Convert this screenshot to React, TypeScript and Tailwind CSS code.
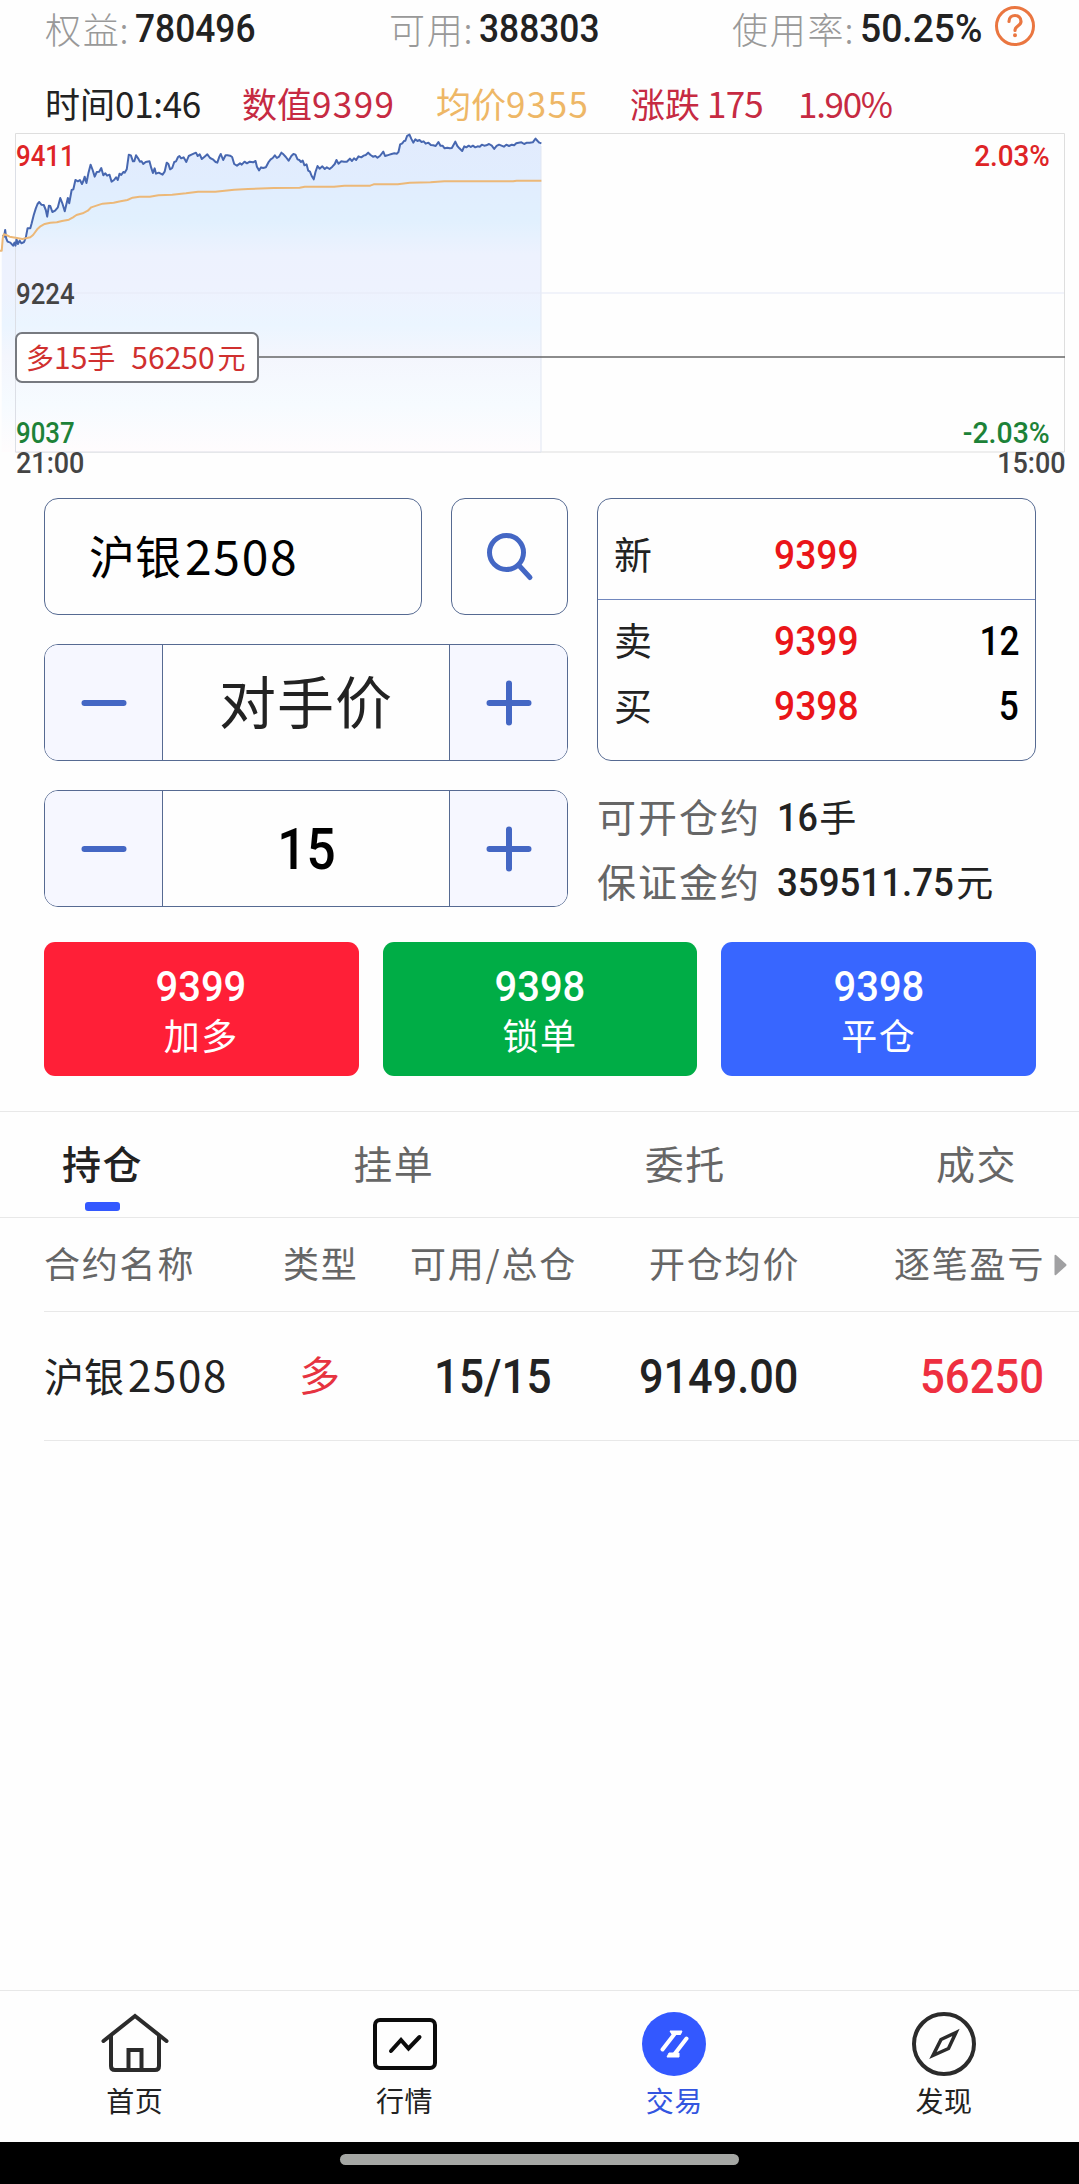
import type { ReactNode } from "react";

const PRICE =
  "8,705 12,710 15,690 18,715 22,725 30,728 38,737 42,728 45,737 48,718 52,732 57,722 62,730 70,726 75,712 80,685 88,685 92,670 98,645 104,625 109,612 114,606 120,614 127,615 133,630 137,650 142,617 146,618 152,636 160,632 168,622 175,594 181,610 188,634 197,594 201,610 208,570 213,568 219,540 226,544 232,540 238,552 242,543 246,530 251,549 257,518 263,494 269,510 275,530 281,516 288,515 294,504 300,526 306,520 311,527 318,524 324,545 331,540 337,532 342,540 347,521 352,525 358,516 362,518 368,508 374,464 380,466 386,484 390,484 395,466 401,475 406,485 411,484 416,492 423,486 434,484 439,503 444,519 449,505 453,521 461,518 472,524 478,515 484,488 489,492 494,508 500,504 506,486 511,484 517,471 521,468 526,475 533,472 541,486 548,468 556,464 564,460 569,458 574,468 580,463 586,477 594,470 602,463 610,474 618,478 626,486 631,488 637,470 641,462 648,480 655,466 661,466 668,467 674,471 680,492 688,497 697,490 702,494 710,485 717,490 725,485 735,487 742,483 746,500 752,511 758,502 764,504 772,502 780,486 786,478 792,474 798,466 804,474 810,470 817,458 823,463 830,471 838,482 846,468 852,462 858,464 864,478 869,480 874,486 879,482 884,496 890,493 895,512 900,515 905,528 911,538 916,516 922,498 928,506 936,499 943,507 949,502 957,507 965,500 972,492 977,480 983,491 991,484 999,485 1007,485 1016,476 1022,483 1028,475 1034,480 1041,469 1049,472 1056,467 1062,465 1069,458 1076,465 1083,470 1090,468 1096,473 1103,468 1113,455 1118,468 1125,466 1131,464 1137,462 1145,460 1152,461 1157,456 1162,433 1168,430 1173,423 1177,422 1182,408 1189,404 1194,416 1200,428 1206,418 1212,423 1218,420 1224,426 1230,424 1236,431 1244,428 1251,435 1258,436 1265,438 1273,426 1279,437 1285,437 1291,445 1299,443 1306,445 1312,444 1322,425 1328,438 1334,445 1342,453 1348,439 1354,442 1361,437 1367,441 1373,437 1380,442 1387,439 1393,440 1399,434 1406,437 1412,436 1420,432 1428,437 1435,447 1442,438 1449,434 1456,437 1463,440 1470,434 1478,438 1486,434 1493,436 1499,430 1506,428 1514,427 1522,432 1530,428 1538,428 1547,427 1555,416 1561,423 1566,428 1572,430";

const AVERAGE =
  "0,752 5,752 8,715 11,703 18,705 28,710 45,713 65,717 88,712 96,705 108,688 116,680 130,672 146,668 165,667 180,663 200,659 212,652 222,645 240,640 255,632 265,622 280,617 298,611 330,608 350,604 370,600 385,593 405,590 435,590 460,586 500,584 540,580 575,575 625,575 680,569 720,567 795,564 870,563 885,560 970,560 1000,557 1075,557 1085,553 1155,553 1190,548 1250,547 1290,544 1400,544 1490,544 1500,542 1572,542";

/** Slightly condensed figures used for every quantity and price. */
function Num({ className, children }: { className: string; children: ReactNode }) {
  return (
    <span className={`inline-block font-[Roboto,sans-serif] font-medium leading-none whitespace-nowrap ${className}`}>
      {children}
    </span>
  );
}

function Balance({ label, value, fit }: { label: string; value: string; fit: string }) {
  return (
    <div className="flex items-center gap-[5px]">
      <span className="-mt-[3px] text-[36px] font-light tracking-[1.8px] leading-none text-[#999]">
        {label}<span className="-ml-px">:</span>
      </span>
      <Num className={`origin-left text-[38px] text-[#222] ${fit}`}>{value}</Num>
    </div>
  );
}

function Chart() {
  return (
    <section className="relative h-[364px]">
      <svg className="absolute left-0 top-0" width="1079" height="354" viewBox="0 130 1079 354" fill="none">
        <defs>
          <linearGradient id="area" x1="0" y1="134" x2="0" y2="452" gradientUnits="userSpaceOnUse">
            <stop offset="0" stopColor="#e2ebfd" />
            <stop offset="0.15" stopColor="#e1edfe" />
            <stop offset="0.27" stopColor="#e1f0fe" />
            <stop offset="0.38" stopColor="#edf2fe" />
            <stop offset="0.48" stopColor="#eef2fe" />
            <stop offset="0.6" stopColor="#ebf5ff" />
            <stop offset="0.7" stopColor="#f4f6fd" />
            <stop offset="0.85" stopColor="#f6fbff" />
            <stop offset="1" stopColor="#fffcfd" />
          </linearGradient>
          <clipPath id="under">
            <path transform="scale(0.3444 0.33333)" d={`M5,1356 L5,752 L${PRICE} L1572,1356Z`} />
          </clipPath>
        </defs>
        <path d="M15.5 133.5H1064.5V452H15.5Z" stroke="#dedede" />
        <rect x="0" y="130" width="541" height="322" fill="url(#area)" clipPath="url(#under)" />
        <path d="M15.5 160V452H541" stroke="#dcdfe6" />
        <path d="M541 146V452" stroke="#e0e6f2" />
        <path d="M16 293H1064" stroke="#e8ebf8" strokeOpacity="0.8" strokeWidth="1.5" />
        <g transform="scale(0.3444 0.33333)" strokeWidth="2" strokeLinejoin="round">
          <polyline points={PRICE} stroke="#4767b0" vectorEffect="non-scaling-stroke" />
          <polyline points={AVERAGE} stroke="#ecb878" vectorEffect="non-scaling-stroke" />
        </g>
        <path d="M258 357H1065" stroke="#666" strokeWidth="1.6" />
      </svg>
      <Num className="absolute left-[16px] top-[12px] origin-left scale-x-[0.89] text-[29px] text-[#de2426]">9411</Num>
      <Num className="absolute left-[16px] top-[150px] origin-left scale-x-[0.89] text-[29px] text-[#444]">9224</Num>
      <Num className="absolute left-[16px] top-[289px] origin-left scale-x-[0.89] text-[29px] text-[#1d8238]">9037</Num>
      <Num className="absolute left-[16px] top-[319px] origin-left scale-x-[0.93] text-[29px] text-[#444]">21:00</Num>
      <Num className="absolute right-[29px] top-[12px] origin-right scale-x-[0.96] text-[29px] text-[#de2426]">2.03%</Num>
      <Num className="absolute right-[29px] top-[289px] origin-right scale-x-[0.98] text-[29px] text-[#1d8238]">-2.03%</Num>
      <Num className="absolute right-[13px] top-[319px] origin-right scale-x-[0.93] text-[29px] text-[#444]">15:00</Num>
      <div className="absolute left-[15px] top-[202px] flex h-[51px] w-[244px] items-center gap-[16px] rounded-[7px] border-2 border-[#777a80] bg-white pb-[4px] pl-[9px] text-[28px] leading-none whitespace-nowrap text-[#d0302f]">
        <span>多<span className="text-[30px]">15</span>手</span>
        <span><span className="text-[30px]">56250</span><span className="ml-[3px]">元</span></span>
      </div>
    </section>
  );
}

function StepIcon({ plus }: { plus?: boolean }) {
  return (
    <svg width="46" height="46" viewBox="0 0 46 46" stroke="#4467c4" strokeWidth="6" strokeLinecap="round">
      <path d={plus ? "M3.5 23H42.5M23 3.5V42.5" : "M3.5 23H42.5"} />
    </svg>
  );
}

function Stepper({ children }: { children: ReactNode }) {
  return (
    <div className="flex h-[117px] w-[524px] overflow-hidden rounded-[14px] border border-[#566a92]">
      <button className="flex w-[118px] items-center justify-center border-r border-[#566a92] bg-[#f6f7ff]">
        <StepIcon />
      </button>
      <div className="flex flex-1 items-center justify-center">{children}</div>
      <button className="flex w-[118px] items-center justify-center border-l border-[#566a92] bg-[#f6f7ff]">
        <StepIcon plus />
      </button>
    </div>
  );
}

function Quote({ label, price, volume }: { label: string; price: string; volume?: string }) {
  return (
    <div className="flex h-[65px] items-center">
      <span className="-mt-[6px] w-[160px] text-[38px] leading-none text-[#222]">{label}</span>
      <Num className="origin-left scale-x-[0.93] text-[40px] text-[#ea1519]">{price}</Num>
      <Num className="ml-auto origin-right scale-x-[0.88] text-[40px] text-black">{volume}</Num>
    </div>
  );
}

function Estimate({ label, value, unit, fit }: { label: string; value: string; unit: string; fit: string }) {
  return (
    <div className="flex h-[65px] items-center leading-none">
      <span className="-mt-[2px] w-[180px] text-[39px] tracking-[2px] text-[#666]">{label}</span>
      <Num className={`mt-[3px] origin-left text-[39px] text-[#222] ${fit}`}>{value}</Num>
      <span className="-mt-[1px] text-[37px] text-[#222]">{unit}</span>
    </div>
  );
}

function Action({ price, label, className }: { price: string; label: string; className: string }) {
  return (
    <button className={`flex h-[134px] flex-1 flex-col items-center rounded-[11px] pt-[23px] text-white ${className}`}>
      <Num className="scale-x-[0.93] text-[43px]">{price}</Num>
      <span className="mt-[8px] text-[36px] tracking-[1.5px] leading-none">{label}</span>
    </button>
  );
}

function NavItem({ label, active, children }: { label: string; active?: boolean; children: ReactNode }) {
  return (
    <div className={`flex flex-1 flex-col items-center pt-[19px] ${active ? "text-[#3355e0]" : "text-[#222]"}`}>
      <svg width="68" height="68" viewBox="0 0 68 68" fill="none">{children}</svg>
      <span className="mt-[8px] text-[28px] leading-none tracking-[0.5px]">{label}</span>
    </div>
  );
}

export default function App() {
  return (
    <div className="flex h-[2184px] w-[1079px] flex-col overflow-hidden bg-[#fefefe] font-['Noto_Sans_CJK_SC',sans-serif] whitespace-nowrap">
      <header className="flex h-[58px] items-center pl-[45px]">
        <div className="w-[344px]"><Balance label="权益" value="780496" fit="scale-x-[0.93]" /></div>
        <div className="w-[343px]"><Balance label="可用" value="388303" fit="scale-x-[0.93]" /></div>
        <Balance label="使用率" value="50.25%" fit="scale-x-[0.98]" />
        <svg className="-mt-[7px] ml-[9px]" width="42" height="42" viewBox="0 0 42 42" fill="none" stroke="#ea7640" strokeLinecap="round">
          <circle cx="21" cy="21" r="18.5" strokeWidth="3" />
          <path d="M15 16.5C15 8.500 27 8.500 27 16.500C27 21 21 20.500 21 25.500" strokeWidth="3.200" />
          <circle cx="21" cy="30.300" r="1" strokeWidth="2" />
        </svg>
      </header>

      <div className="flex h-[72px] items-center pl-[45px] pt-[17px] text-[35px] leading-none">
        <span className="w-[197px] text-[#222]">时间<span className="tracking-[-0.3px]">01:46</span></span>
        <span className="w-[194px] text-[#c62a42]">数值<span className="tracking-[1.4px]">9399</span></span>
        <span className="w-[194px] text-[#eeb766]">均价<span className="tracking-[1.4px]">9355</span></span>
        <span className="w-[168px] text-[#c62a42]">涨跌<span className="tracking-[-0.8px]"> 175</span></span>
        <span className="tracking-[-1.3px] text-[#c62a42]">1.90%</span>
      </div>

      <Chart />

      <section className="flex gap-[29px] pt-[4px] pl-[44px]">
        <div className="flex w-[524px] flex-col gap-[29px]">
          <div className="flex gap-[29px]">
            <div className="flex h-[117px] w-[378px] items-center rounded-[14px] border border-[#566a92] pb-[6px] pl-[44px] text-[46px] leading-none text-black">
              沪银<span className="ml-[4px] text-[48px] tracking-[1.7px]">2508</span>
            </div>
            <button className="flex h-[117px] w-[117px] items-center justify-center rounded-[14px] border border-[#566a92]">
              <svg width="52" height="52" viewBox="0 0 52 52" fill="none" stroke="#4467c4" strokeWidth="5" strokeLinecap="round">
                <circle cx="22.500" cy="21.500" r="17" />
                <path d="M35 34.500L46 46.500" />
              </svg>
            </button>
          </div>
          <Stepper>
            <span className="-mt-[7px] text-[57px] leading-none tracking-[1px] text-[#222]">对手价</span>
          </Stepper>
          <Stepper>
            <Num className="mt-[2px] scale-x-[0.9] text-[57px] text-black">15</Num>
          </Stepper>
        </div>
        <div className="w-[439px]">
          <div className="h-[263px] rounded-[14px] border border-[#566a92]">
            <div className="h-[101px] border-b border-[#7187bd] px-[16px] pt-[24px]">
              <Quote label="新" price="9399" />
            </div>
            <div className="px-[16px] pt-[9px]">
              <Quote label="卖" price="9399" volume="12" />
              <Quote label="买" price="9398" volume="5" />
            </div>
          </div>
          <div className="mt-[23px]">
            <Estimate label="可开仓约" value="16" unit="手" fit="mr-[-2px] scale-x-[0.92]" />
            <Estimate label="保证金约" value="359511.75" unit="元" fit="mr-[-9px] scale-x-[0.94]" />
          </div>
        </div>
      </section>

      <div className="mt-[28px] flex gap-[24px] pr-[43px] pl-[44px]">
        <Action price="9399" label="加多" className="bg-[#ff1f37]" />
        <Action price="9398" label="锁单" className="bg-[#00ad46]" />
        <Action price="9398" label="平仓" className="bg-[#3866ff]" />
      </div>

      <nav className="mt-[35px] flex h-[107px] justify-between border-y border-[#e8e8e8] px-[62px] pt-[31px] text-[39px] leading-none tracking-[1.500px] text-[#666]">
        <div className="flex flex-col items-center text-[#222]">
          <span className="font-medium">持仓</span>
          <span className="mt-[20px] h-[9px] w-[35px] rounded-[3px] bg-[#3358ff]" />
        </div>
        <span>挂单</span>
        <span>委托</span>
        <span>成交</span>
      </nav>

      <section className="pl-[44px]">
        <div className="flex h-[94px] items-center border-b border-[#e8e8e8] pb-[5px] text-[36px] leading-none tracking-[1.800px] text-[#666]">
          <span className="w-[239px]">合约名称</span>
          <span className="w-[127px]">类型</span>
          <span className="w-[239px]">可用/总仓</span>
          <span className="w-[245px]">开仓均价</span>
          <span>逐笔盈亏</span>
          <svg className="mt-[5px] ml-[9px]" width="13" height="22" viewBox="0 0 13 22" fill="#a0a0a2">
            <path d="M0.500 2Q0.500 0 2 1L12 10Q13 11 12 12L2 21Q0.500 22 0.500 20Z" />
          </svg>
        </div>
        <div className="flex h-[129px] items-center border-b border-[#e8e8e8] text-[#222]">
          <span className="-mt-[4px] w-[255px] text-[40px] leading-none">沪银<span className="ml-[4px] text-[42px] tracking-[1.7px]">2508</span></span>
          <span className="-mt-[6px] w-[135px] text-[41px] leading-none text-[#e63340]">多</span>
          <Num className="mt-[1px] w-[205px] origin-left scale-x-[0.92] text-[48px]">15/15</Num>
          <Num className="mt-[1px] w-[281px] origin-left scale-x-[0.9] text-[48px]">9149.00</Num>
          <Num className="mt-[1px] origin-left scale-x-[0.91] text-[48px] text-[#ee2f40]">56250</Num>
        </div>
      </section>

      <footer className="mt-auto">
        <div className="flex h-[152px] border-t border-[#e8e8e8]">
          <NavItem label="首页">
            <g stroke="#2b2b2b" strokeWidth="4" strokeLinecap="round">
              <path d="M2.500 31L34 6L65.500 31" />
              <path d="M10 26V56Q10 60 14 60H54Q58 60 58 56V26" />
              <path d="M27.500 60V40H40.500V60" strokeLinecap="butt" />
            </g>
          </NavItem>
          <NavItem label="行情">
            <g stroke="#0c0c0c" strokeWidth="4">
              <rect x="4" y="10" width="60" height="48" rx="5" />
              <path d="M20 41L30 30L37.500 38.500L48.500 27" strokeLinecap="round" />
            </g>
          </NavItem>
          <NavItem label="交易" active>
            <circle cx="34" cy="34" r="32" fill="#3358ff" />
            <path d="M22.500 39.500L34.500 24M46.500 28.500L35 43.500" stroke="#fff" strokeWidth="4" strokeLinecap="round" />
            <path d="M30 21H42L40.500 24.500H32ZM39 47H27L29 43H39Z" fill="#fff" stroke="#fff" strokeWidth="1" />
          </NavItem>
          <NavItem label="发现">
            <circle cx="34" cy="34" r="30" stroke="#2b2b2b" strokeWidth="4" />
            <path d="M46 22.500L31 29.500L23 45.500L38.500 38.500Z" stroke="#2b2b2b" strokeWidth="3.500" />
          </NavItem>
        </div>
        <div className="flex h-[42px] justify-center bg-black pt-[12px]">
          <div className="h-[11px] w-[399px] rounded-full bg-[#a5a7a4]" />
        </div>
      </footer>
    </div>
  );
}
